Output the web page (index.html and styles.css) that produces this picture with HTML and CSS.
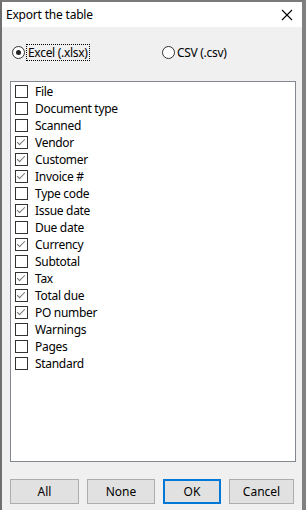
FILE: index.html
```html
<!DOCTYPE html>
<html lang="en">
<head>
    <meta charset="UTF-8">
    <title>Export the table</title>
    <link rel="stylesheet" href="styles.css">
</head>
<body>
    <div class="window">
        <!-- Title bar -->
        <div class="title-bar">
            <span class="title">Export the table</span>
            <svg class="close" width="12" height="12" viewBox="0 0 12 12">
                <path d="M1 1L11 11M11 1L1 11" stroke="#000" stroke-width="1.1" fill="none"/>
            </svg>
        </div>

        <div class="content">
            <!-- Format choice -->
            <div class="formats">
                <label class="radio radio-excel">
                    <span class="dot checked"></span>
                    <span class="focus">Excel (.xlsx)</span>
                </label>
                <label class="radio radio-csv">
                    <span class="dot"></span>
                    <span>CSV (.csv)</span>
                </label>
            </div>

            <!-- Column list -->
            <div class="list">
                <div class="row"><span class="box"></span>File</div>
                <div class="row"><span class="box"></span>Document type</div>
                <div class="row"><span class="box"></span>Scanned</div>
                <div class="row"><span class="box on"></span>Vendor</div>
                <div class="row"><span class="box on"></span>Customer</div>
                <div class="row"><span class="box on"></span>Invoice #</div>
                <div class="row"><span class="box"></span>Type code</div>
                <div class="row"><span class="box on"></span>Issue date</div>
                <div class="row"><span class="box"></span>Due date</div>
                <div class="row"><span class="box on"></span>Currency</div>
                <div class="row"><span class="box"></span>Subtotal</div>
                <div class="row"><span class="box on"></span>Tax</div>
                <div class="row"><span class="box on"></span>Total due</div>
                <div class="row"><span class="box on"></span>PO number</div>
                <div class="row"><span class="box"></span>Warnings</div>
                <div class="row"><span class="box"></span>Pages</div>
                <div class="row"><span class="box"></span>Standard</div>
            </div>

            <!-- Buttons -->
            <div class="buttons">
                <button class="btn btn-all">All</button>
                <button class="btn btn-none">None</button>
                <button class="btn btn-ok">OK</button>
                <button class="btn btn-cancel">Cancel</button>
            </div>
        </div>
    </div>
</body>
</html>
```

FILE: styles.css
```css
body {
    margin: 0;
    font-family: "Noto Sans", "Open Sans", sans-serif;
    font-size: 12px;
    color: #000;
    background-color: #f0f0f0;
}

.window {
    width: 306px;
    height: 510px;
    box-sizing: border-box;
    border-top: 2px solid #7a7a7a;
    border-left: 2px solid #6f6f6f;
    border-right: 4px solid #808080;
    display: flex;
    flex-direction: column;
    overflow: hidden;
}

.title-bar {
    height: 25px;
    background-color: #fff;
    display: flex;
    align-items: center;
    justify-content: space-between;
    padding: 0 9px 0 4px;
    flex-shrink: 0;
}

.title {
    letter-spacing: -0.2px;
}

.content {
    flex: 1;
    display: flex;
    flex-direction: column;
    padding: 17px 6px 0 8px;
}

.formats {
    display: flex;
    height: 16px;
    align-items: center;
}

.radio {
    display: flex;
    align-items: center;
    gap: 2px;
    letter-spacing: -0.3px;
}

.radio-excel {
    width: 150px;
    margin-left: 2px;
}

.dot {
    width: 11px;
    height: 11px;
    border: 1px solid #333;
    border-radius: 50%;
    background: #fff;
    position: relative;
}

.dot.checked::after {
    content: "";
    position: absolute;
    left: 3px;
    top: 3px;
    width: 5px;
    height: 5px;
    border-radius: 50%;
    background: #222;
}

.focus {
    outline: 1px dotted #000;
    padding: 0 1px;
    line-height: 15px;
}

.list {
    margin-top: 21px;
    height: 378px;
    background-color: #fff;
    border: 1px solid #828790;
    padding: 1px 0 0 4px;
    box-sizing: content-box;
}

.row {
    height: 17px;
    display: flex;
    align-items: center;
    gap: 7px;
    letter-spacing: -0.3px;
    line-height: 17px;
}

.box {
    width: 11px;
    height: 11px;
    border: 1px solid #333;
    background: #fff;
    position: relative;
    flex-shrink: 0;
}

.box.on::after {
    content: "";
    position: absolute;
    left: 3px;
    top: 0px;
    width: 3px;
    height: 7px;
    border: solid #707070;
    border-width: 0 1px 1px 0;
    transform: rotate(45deg);
}

.buttons {
    display: flex;
    gap: 8px;
    margin-top: 17px;
}

.btn {
    height: 25px;
    font-family: inherit;
    font-size: 12px;
    background-color: #e1e1e1;
    border: 1px solid #adadad;
    padding: 0;
    color: #000;
}

.btn-all { width: 69px; }
.btn-none { width: 68px; }
.btn-ok {
    width: 58px;
    border: 2px solid #0078d7;
}
.btn-cancel { width: 65px; }
```
